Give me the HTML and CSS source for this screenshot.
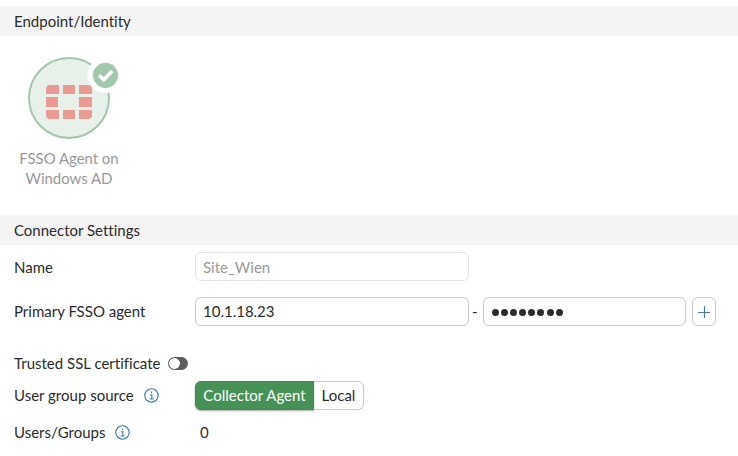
FILE: index.html
```
<!DOCTYPE html>
<html lang="en">
<head>
<meta charset="utf-8">
<title>Connector Settings</title>
<link rel="stylesheet" href="styles.css">
</head>
<body>
<h2 class="section-title">Endpoint/Identity</h2>
<div class="connector">
  <div class="connector-icon">
    <svg width="94" height="86" viewBox="0 0 94 86">
      <circle cx="43" cy="43" r="40" fill="#e7f1e9" stroke="#a2c8ac" stroke-width="2"/>
      <g fill="#ea9a93">
        <path d="M24 30h9v9H20v-5a4 4 0 0 1 4-4zM37 30h12v9H37zM53 30h9a4 4 0 0 1 4 4v5H53z"/>
        <path d="M20 42h12v10H20zM53 42h13v10H53z"/>
        <path d="M20 55h13v9h-9a4 4 0 0 1-4-4zM37 55h12v9H37zM53 55h13v5a4 4 0 0 1-4 4h-9z"/>
      </g>
      <circle cx="79.500" cy="20" r="18" fill="#fff"/>
      <circle cx="79.500" cy="20.300" r="12.600" fill="#a2c8ac"/>
      <path d="M73.200 20.200l4.600 4.500 8.400-8.600" fill="none" stroke="#fff" stroke-width="3.600"/>
    </svg>
  </div>
  <div class="connector-name">FSSO Agent on<br>Windows AD</div>
</div>
<h2 class="section-title">Connector Settings</h2>
<div class="settings">
  <div class="row">
    <div class="label">Name</div>
    <div class="field host disabled">Site_Wien</div>
  </div>
  <div class="row agent">
    <div class="label">Primary FSSO agent</div>
    <div class="field host">10.1.18.23</div>
    <span class="dash">-</span>
    <div class="field password"><i></i><i></i><i></i><i></i><i></i><i></i><i></i><i></i></div>
    <button class="add" aria-label="Add"><svg width="12" height="12" viewBox="0 0 12 12"><path d="M0 6.500h12M6.500 0v12" stroke="#4d789c" fill="none" stroke-width="1.200"/></svg></button>
  </div>
  <div class="row trusted">
    <span>Trusted SSL certificate</span><span class="toggle"></span>
  </div>
  <div class="row source">
    <div class="label">User group source<svg class="info" width="15" height="15" viewBox="0 0 15 15"><circle cx="7.500" cy="7.500" r="6.700"/><path d="M7.500 3.500v1.600M6 6.800h1.800v4M5.700 11h4"/></svg></div>
    <div class="segmented"><span class="segment active">Collector Agent</span><span class="segment">Local</span></div>
  </div>
  <div class="row groups">
    <div class="label">Users/Groups<svg class="info" width="15" height="15" viewBox="0 0 15 15"><circle cx="7.500" cy="7.500" r="6.700"/><path d="M7.500 3.500v1.600M6 6.800h1.800v4M5.700 11h4"/></svg></div>
    <span class="count">0</span>
  </div>
</div>
</body>
</html>
```
FILE: styles.css
```
* { box-sizing: border-box; }
body {
  margin: 0;
  padding-top: 6px;
  height: 456px;
  overflow: hidden;
  background: #fff;
  color: #2b2b2b;
  font: 15px/20px Lato, "Liberation Sans", sans-serif;
  font-variant-ligatures: none;
}
.section-title {
  margin: 0;
  height: 30px;
  padding: 0 14px;
  background: #f4f4f4;
  font-size: 15px;
  font-weight: 400;
  line-height: 30px;
}
.connector {
  width: 138px;
  height: 179px;
  padding-top: 19px;
  color: #999;
  text-align: center;
}
.connector-icon { height: 86px; padding-left: 26px; text-align: left; }
.connector-icon svg { display: block; }
.connector-name { margin-top: 7px; letter-spacing: -.05px; }
.settings { padding: 7px 0 0 14px; }
.row { display: flex; align-items: center; height: 29px; }
.label { display: flex; align-items: center; width: 181px; flex: none; }
.field {
  height: 29px;
  padding: 0 7px;
  border: 1px solid #c9c9c9;
  border-radius: 6px;
  line-height: 27px;
}
.host { width: 274px; }
.disabled { padding-top: 1px; border-color: #e3e3e3; color: #999; }
.agent { margin-top: 16px; }
.agent .label { padding-bottom: 2px; }
.dash { width: 14px; padding: 0 0 2px 3px; }
.password { display: flex; align-items: center; gap: 2px; width: 203px; padding-left: 8px; padding-top: 2px; }
.password i { width: 7px; height: 7px; margin-right: .1px; border-radius: 50%; background: #2b2b2b; }
.add {
  display: flex;
  align-items: center;
  justify-content: center;
  width: 24px;
  height: 29px;
  margin-left: 6px;
  padding: 0;
  border: 1px solid #c9c9c9;
  border-radius: 6px;
  background: #fff;
}
.trusted { height: 20px; margin-top: 27px; }
.toggle {
  width: 20px;
  height: 13px;
  margin-left: 8px;
  border-radius: 7px;
  background: radial-gradient(circle at 6.5px 6.5px, #fff 5px, #5e5e5e 5.7px);
}
.source { margin-top: 8px; }
.source .label { padding-bottom: 1px; }
.info { margin-left: 10px; fill: none; stroke: #3878ad; stroke-width: 1.1; }
.segmented { display: flex; }
.segment {
  height: 29px;
  width: 50px;
  border: 1px solid #c9c9c9;
  border-left: 0;
  border-radius: 0 6px 6px 0;
  line-height: 27px;
  text-align: center;
}
.segment.active {
  width: 119px;
  border: 1px solid #577b60;
  border-radius: 6px 0 0 6px;
  background: #459156;
  box-shadow: 0 1px 2px rgba(0, 0, 0, .35);
  color: #fff;
}
.groups { height: 20px; margin-top: 12px; }
.count { padding-left: 5px; }
```
